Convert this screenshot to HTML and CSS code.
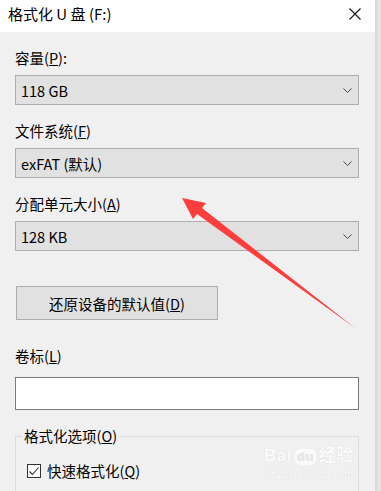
FILE: index.html
```html
<!DOCTYPE html>
<html>
<head>
    <meta charset="UTF-8">
    <title>格式化 U 盘 (F:)</title>
    <link rel="stylesheet" href="styles.css">
</head>
<body>
    <div class="screen">
        <div class="window">
            <div class="titlebar">
                <span class="title">格式化 U 盘 (F:)</span>
                <svg class="close" width="12" height="12" viewBox="0 0 12 12">
                    <path d="M0.5 0.5 L11.5 11.5 M11.5 0.5 L0.5 11.5" stroke="#111" stroke-width="1.1" fill="none"/>
                </svg>
            </div>
            <div class="content">
                <div class="field">
                    <div class="label">容量(<u>P</u>):</div>
                    <div class="select">
                        <span>118 GB</span>
                        <svg class="chevron" width="9" height="5" viewBox="0 0 9 5"><path d="M0.5 0.5 L4.5 4.5 L8.5 0.5" stroke="#444" fill="none"/></svg>
                    </div>
                </div>
                <div class="field">
                    <div class="label">文件系统(<u>F</u>)</div>
                    <div class="select">
                        <span>exFAT (默认)</span>
                        <svg class="chevron" width="9" height="5" viewBox="0 0 9 5"><path d="M0.5 0.5 L4.5 4.5 L8.5 0.5" stroke="#444" fill="none"/></svg>
                    </div>
                </div>
                <div class="field">
                    <div class="label">分配单元大小(<u>A</u>)</div>
                    <div class="select">
                        <span>128 KB</span>
                        <svg class="chevron" width="9" height="5" viewBox="0 0 9 5"><path d="M0.5 0.5 L4.5 4.5 L8.5 0.5" stroke="#444" fill="none"/></svg>
                    </div>
                </div>

                <button class="btn">还原设备的默认值(<u>D</u>)</button>

                <div class="label volume-label">卷标(<u>L</u>)</div>
                <div class="input"></div>

                <fieldset class="group">
                    <legend>格式化选项(<u>O</u>)</legend>
                    <label class="check">
                        <span class="box">
                            <svg width="12" height="12" viewBox="0 0 12 12"><path d="M1.5 6.5 L4.5 9.5 L10.5 2.5" stroke="#333" stroke-width="1.1" fill="none"/></svg>
                        </span>
                        <span>快速格式化(<u>Q</u>)</span>
                    </label>
                </fieldset>
            </div>
        </div>
        <div class="edge"></div>

        <!-- 水印 -->
        <div class="watermark">
            <div class="wm-logo">Bai<span class="wm-paw">du</span>经验</div>
            <div class="wm-url">jingyan.baidu.com</div>
        </div>

        <!-- 红色箭头 -->
        <svg class="arrow" width="381" height="491" viewBox="0 0 381 491">
            <polygon points="182,198 206,203 202,208 355,328 197,214 193,219" fill="#fe3d3d"/>
        </svg>
    </div>
</body>
</html>
```

FILE: styles.css
```css
body {
    margin: 0;
    background: #f3f3f3;
    font-family: "Noto Sans CJK SC", "Liberation Sans", sans-serif;
    color: #000;
}
.screen {
    position: relative;
    display: flex;
    width: 381px;
    height: 491px;
    overflow: hidden;
}
.window {
    width: 375px;
    flex-shrink: 0;
    background: #f0f0f0;
}
.edge {
    flex: 1;
    background: #e4e4e4;
    border-left: 2px solid #d8d8d8;
}
.titlebar {
    height: 32px;
    background: #fff;
    display: flex;
    align-items: center;
    justify-content: space-between;
    padding: 0 14px 0 8px;
}
.title {
    font-size: 15px;
    line-height: 20px;
    margin-top: -4px;
}
.close {
    display: block;
    margin-top: -5px;
}
.content {
    padding: 16px 16px 0 15px;
}
.label {
    font-size: 14.5px;
    line-height: 20px;
    margin-bottom: 7px;
}
.field + .field {
    margin-top: 16px;
}
.select {
    height: 30px;
    box-sizing: border-box;
    border: 1px solid #adadad;
    background: #e1e1e1;
    display: flex;
    align-items: center;
    justify-content: space-between;
    padding: 0 6px 0 5px;
    font-size: 14.5px;
}
.chevron {
    display: block;
}
.btn {
    display: block;
    margin: 35px 0 0 1px;
    width: 202px;
    height: 34px;
    border: 1px solid #adadad;
    background: #e1e1e1;
    font-family: inherit;
    font-size: 14.5px;
    color: #000;
    padding: 0;
}
.volume-label {
    margin-top: 26px;
    margin-bottom: 11px;
}
.input {
    height: 33px;
    box-sizing: border-box;
    border: 1px solid #7a7a7a;
    background: #fff;
}
.group {
    margin: 16px 0 0 0;
    padding: 0 6px 20px 6px;
    border: 1px solid #dcdcdc;
    min-width: 0;
}
.group legend {
    padding: 0 2px;
    font-size: 14.5px;
    line-height: 20px;
}
.check {
    display: flex;
    align-items: center;
    gap: 6px;
    margin-top: 15px;
    padding-left: 5px;
    font-size: 14.5px;
    line-height: 20px;
}
.box {
    width: 14px;
    height: 14px;
    box-sizing: border-box;
    border: 1px solid #333;
    background: #fff;
    display: flex;
    align-items: center;
    justify-content: center;
}
.box svg {
    display: block;
}
.watermark {
    position: absolute;
    left: 264px;
    top: 444px;
    color: #fbfbfb;
    text-shadow: 0 0 1px #d4d4d4;
    font-family: "Liberation Sans", "Noto Sans CJK SC", sans-serif;
}
.wm-logo {
    font-size: 17px;
    font-weight: bold;
    line-height: 24px;
    letter-spacing: 0.5px;
}
.wm-paw {
    display: inline-block;
    background: #fbfbfb;
    color: #e8e8e8;
    border-radius: 6px;
    padding: 0 2px;
    margin: 0 3px;
    font-size: 13px;
    line-height: 16px;
}
.wm-url {
    font-family: "Liberation Serif", serif;
    font-size: 12px;
    line-height: 12px;
}
.arrow {
    position: absolute;
    left: 0;
    top: 0;
    pointer-events: none;
}
```
